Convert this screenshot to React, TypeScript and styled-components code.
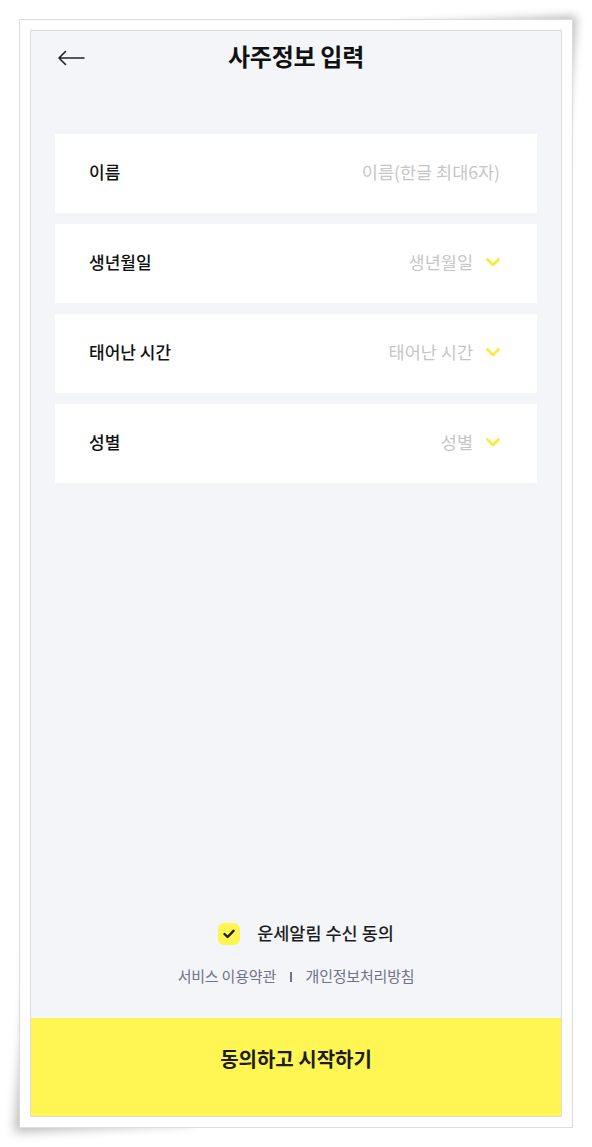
import React from 'react'
import styled, { createGlobalStyle } from 'styled-components'

const GlobalStyle = createGlobalStyle`
  html, body {
    margin: 0;
    padding: 0;
    background: #ffffff;
  }
  body {
    font-family: "Noto Sans CJK KR", "Noto Sans", sans-serif;
    color: #111;
  }
  * {
    box-sizing: border-box;
  }
`

const Page = styled.div`
  position: relative;
  z-index: 0;
  padding: 19px 20px 19px 19px;
`

// paper card with lifted-corner shadows
const Paper = styled.div`
  position: relative;
  width: 554px;
  height: 1109px;
  padding: 10px;
  background: #fff;
  border: 1px solid #dcdcdc;

  &::before,
  &::after {
    content: '';
    position: absolute;
    z-index: -1;
    width: 32%;
    height: 20%;
    background: #fff;
  }
  &::before {
    top: 2px;
    right: 2px;
    transform-origin: top right;
    transform: skew(-5deg, -3deg);
    box-shadow: 6px -6px 10px rgba(0, 0, 0, 0.28);
  }
  &::after {
    bottom: 2px;
    left: 2px;
    transform-origin: bottom left;
    transform: skew(-5deg, -3deg);
    box-shadow: -7px 7px 11px rgba(0, 0, 0, 0.28);
  }
`

const Screen = styled.div`
  display: flex;
  flex-direction: column;
  height: 100%;
  background: #f4f5f9;
  border: 1px solid #dcdcdc;
`

const Header = styled.header`
  position: relative;
  display: flex;
  align-items: center;
  justify-content: center;
  height: 54px;
`

const BackButton = styled.button`
  position: absolute;
  left: 26px;
  top: 50%;
  transform: translateY(-50%);
  display: flex;
  padding: 0;
  border: none;
  background: none;
  cursor: pointer;
`

const Title = styled.h1`
  margin: 0 0 6px;
  font-size: 24px;
  font-weight: 700;
  color: #111;
  letter-spacing: -0.3px;
`

const Form = styled.div`
  display: flex;
  flex-direction: column;
  gap: 11px;
  margin: 49px 24px 0;
`

const Field = styled.div`
  display: flex;
  align-items: center;
  justify-content: space-between;
  height: 79px;
  padding: 0 37px 5px 34px;
  background: #fff;
  cursor: pointer;
`

const Label = styled.span`
  font-size: 17px;
  font-weight: 500;
  color: #111;
`

const Value = styled.span`
  display: flex;
  align-items: center;
  gap: 13px;
  font-size: 17.5px;
  color: #c6c6c6;

  svg {
    margin-top: 3px;
  }
`

const Spacer = styled.div`
  flex: 1;
`

const Agree = styled.label`
  display: flex;
  align-items: center;
  justify-content: center;
  gap: 17px;
  margin-left: 20px;
  font-size: 17.5px;
  font-weight: 500;
  color: #1d1d1d;
  cursor: pointer;
`

const Check = styled.span`
  display: flex;
  align-items: center;
  justify-content: center;
  width: 22px;
  height: 22px;
  margin-top: 2px;
  border-radius: 6px;
  background: #fff451;
`

const Links = styled.div`
  display: flex;
  align-items: center;
  justify-content: center;
  gap: 14px;
  margin: 20px 0 31px;
  font-size: 15px;
  letter-spacing: -0.2px;
  color: #6e7385;
  line-height: 22px;
`

const Divider = styled.span`
  width: 1.5px;
  height: 10px;
  margin-top: 2px;
  background: #6e7385;
`

const StartButton = styled.button`
  height: 98px;
  padding: 0 0 18px;
  border: none;
  background: #fff653;
  font-family: inherit;
  font-size: 20px;
  font-weight: 700;
  color: #1d1d1d;
  cursor: pointer;
`

function Chevron() {
  return (
    <svg width="14" height="9" viewBox="0 0 14 9" fill="none">
      <path d="M1.5 1.5 L7 7 L12.5 1.5" stroke="#fde93a" strokeWidth="2.6" strokeLinecap="round" strokeLinejoin="round" />
    </svg>
  )
}

const fields = [
  { label: '이름', value: '이름(한글 최대6자)', select: false },
  { label: '생년월일', value: '생년월일', select: true },
  { label: '태어난 시간', value: '태어난 시간', select: true },
  { label: '성별', value: '성별', select: true },
]

function App() {
  return (
    <>
      <GlobalStyle />
      <Page>
        <Paper>
          <Screen>
            <Header>
              <BackButton aria-label="back">
                <svg width="28" height="16" viewBox="0 0 28 16" fill="none">
                  <path d="M27 8 H2 M8.5 1.5 L2 8 L8.5 14.5" stroke="#222" strokeWidth="1.6" strokeLinecap="round" strokeLinejoin="round" />
                </svg>
              </BackButton>
              <Title>사주정보 입력</Title>
            </Header>
            <Form>
              {fields.map(f => (
                <Field key={f.label}>
                  <Label>{f.label}</Label>
                  <Value>
                    {f.value}
                    {f.select && <Chevron />}
                  </Value>
                </Field>
              ))}
            </Form>
            <Spacer />
            <Agree>
              <Check>
                <svg width="12" height="10" viewBox="0 0 12 10" fill="none">
                  <path d="M1.5 5 L4.6 8 L10.5 1.8" stroke="#1d1d1d" strokeWidth="2.4" strokeLinecap="round" strokeLinejoin="round" />
                </svg>
              </Check>
              운세알림 수신 동의
            </Agree>
            <Links>
              <span>서비스 이용약관</span>
              <Divider />
              <span>개인정보처리방침</span>
            </Links>
            <StartButton>동의하고 시작하기</StartButton>
          </Screen>
        </Paper>
      </Page>
    </>
  )
}

export default App
